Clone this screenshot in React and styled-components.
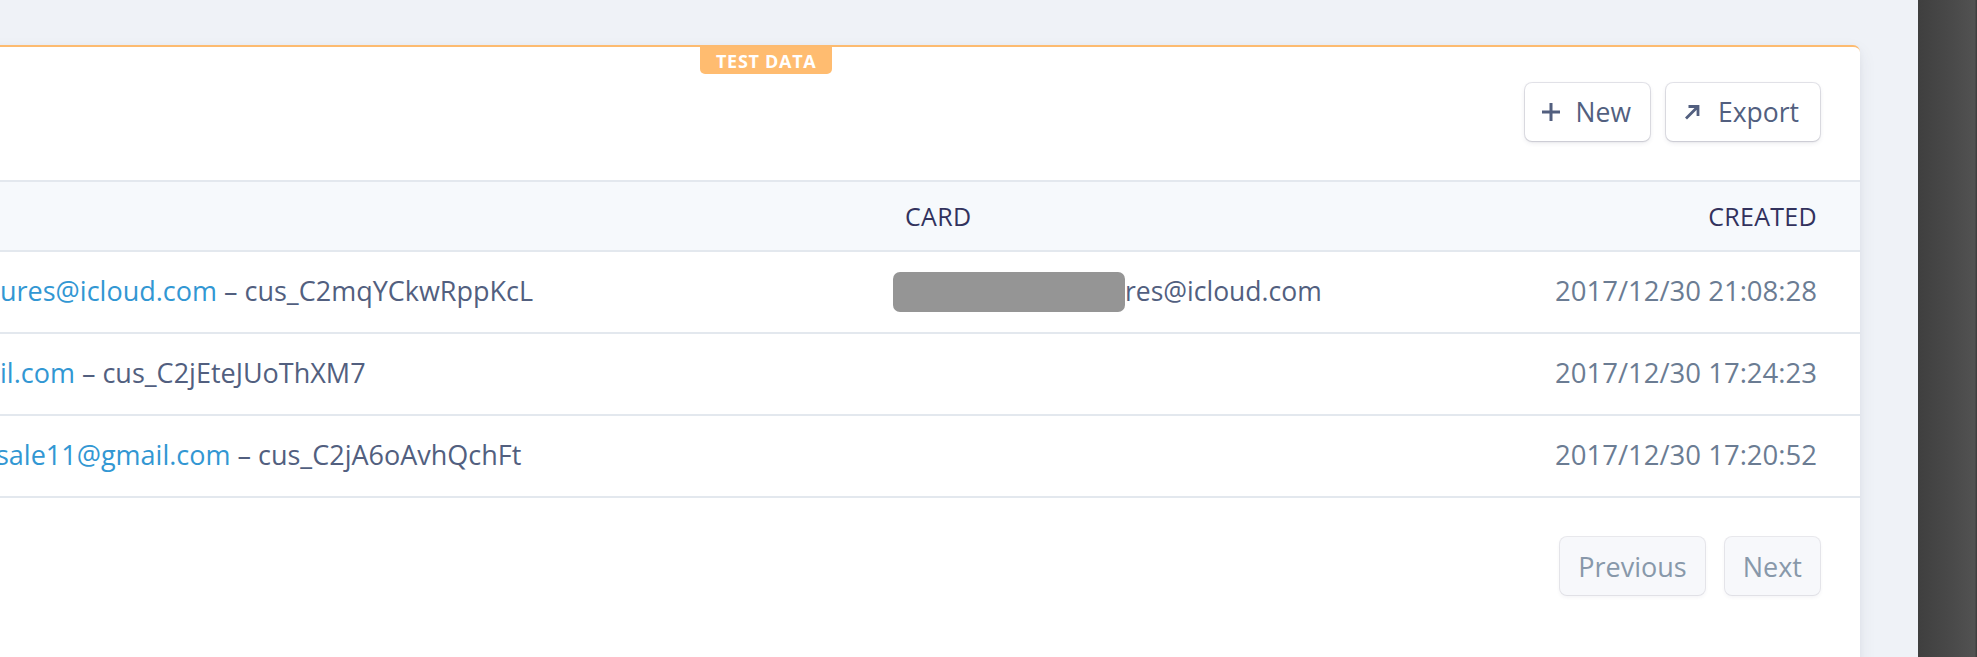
import React from "react"
import styled, { createGlobalStyle } from "styled-components"

const GlobalStyle = createGlobalStyle`
  html, body {
    margin: 0;
    padding: 0;
    background: #eff2f7;
    font-family: "Open Sans", "Noto Sans", sans-serif;
    -webkit-font-smoothing: antialiased;
  }
`

const rows = [
  {
    email: "ures@icloud.com",
    id: "cus_C2mqYCkwRppKcL",
    card: "res@icloud.com",
    created: "2017/12/30 21:08:28",
    cut: 0,
  },
  {
    email: "il.com",
    id: "cus_C2jEteJUoThXM7",
    created: "2017/12/30 17:24:23",
    cut: 0,
  },
  {
    email: "sale11@gmail.com",
    id: "cus_C2jA6oAvhQchFt",
    created: "2017/12/30 17:20:52",
    cut: -4,
  },
]

const PlusIcon = () => (
  <svg width="20" height="20" viewBox="0 0 20 20" fill="none">
    <path d="M10 1v18M1 10h18" stroke="#525f7f" strokeWidth="3" />
  </svg>
)

const ArrowIcon = () => (
  <svg width="16" height="16" viewBox="0 0 16 16" fill="none">
    <path
      d="M2 14.5L13.5 3M4.5 2.5h9.5v9.5"
      stroke="#525f7f"
      strokeWidth="2.8"
    />
  </svg>
)

const App = () => (
  <Page>
    <GlobalStyle />
    <Main>
      <Card>
        <Badge>Test data</Badge>
        <Toolbar>
          <Button>
            <PlusIcon />
            New
          </Button>
          <Button wide>
            <ArrowIcon />
            Export
          </Button>
        </Toolbar>
        <HeaderRow>
          <span />
          <HeadCell>Card</HeadCell>
          <HeadCell right>Created</HeadCell>
        </HeaderRow>
        {rows.map((r) => (
          <Row key={r.id}>
            <Customer cut={r.cut}>
              <Email>{r.email}</Email> – {r.id}
            </Customer>
            <CardCell>
              {r.card && (
                <>
                  <Redacted />
                  {r.card}
                </>
              )}
            </CardCell>
            <DateCell>{r.created}</DateCell>
          </Row>
        ))}
        <Pager>
          <PageButton>Previous</PageButton>
          <PageButton>Next</PageButton>
        </Pager>
      </Card>
    </Main>
    <SideBar />
  </Page>
)

export default App

const Page = styled.div`
  display: flex;
  height: 657px;
  overflow: hidden;
  background: #eff2f7;
`

const Main = styled.div`
  flex: 1;
  min-width: 0;
  padding: 45px 58px 0 0;
  overflow: hidden;
`

const SideBar = styled.div`
  width: 59px;
  flex-shrink: 0;
  background: linear-gradient(90deg, #3f3f3f 0%, #4a4a4a 60%, #525252 96%, #3a3a3a 100%);
`

const Card = styled.div`
  position: relative;
  margin-left: -40px;
  padding-left: 40px;
  height: 700px;
  background: #fff;
  border-top: 2px solid #fdbb70;
  border-top-right-radius: 7px;
  box-shadow: 0 7px 18px rgba(50, 50, 93, 0.08), 0 2px 6px rgba(0, 0, 0, 0.04);
`

const Badge = styled.div`
  position: absolute;
  top: 0;
  left: 740px;
  height: 27px;
  padding: 0 16px;
  display: flex;
  align-items: center;
  background: #ffbc70;
  color: #fff;
  font-size: 18px;
  font-weight: 700;
  letter-spacing: 0.7px;
  text-transform: uppercase;
  border-radius: 0 0 5px 5px;
`

const Toolbar = styled.div`
  display: flex;
  justify-content: flex-end;
  gap: 16px;
  padding: 36px 40px 39px 0;
`

const Button = styled.button`
  display: flex;
  align-items: center;
  gap: ${(p) => (p.wide ? "18px" : "15px")};
  height: 58px;
  padding: ${(p) => (p.wide ? "0 21px 0 18px" : "0 19px 0 16px")};
  background: #fff;
  border: none;
  border-radius: 7px;
  font-family: inherit;
  font-size: 26.5px;
  font-weight: 500;
  color: #525f7f;
  box-shadow: 0 0 0 1px rgba(50, 50, 93, 0.12), 0 2px 5px rgba(50, 50, 93, 0.1),
    0 1px 2px rgba(0, 0, 0, 0.08);
`

const HeaderRow = styled.div`
  display: grid;
  grid-template-columns: 905px 1fr auto;
  align-items: center;
  height: 68px;
  padding-right: 43px;
  margin-left: -40px;
  padding-left: 40px;
  background: #f6f9fc;
  border-top: 2px solid #e3e8ee;
  border-bottom: 2px solid #e3e8ee;
`

const HeadCell = styled.div`
  font-size: 25px;
  font-weight: 500;
  letter-spacing: 0.3px;
  text-transform: uppercase;
  color: #32325d;
  text-align: ${(p) => (p.right ? "right" : "left")};
`

const Row = styled.div`
  display: grid;
  grid-template-columns: 905px 1fr auto;
  align-items: center;
  height: 77px;
  padding: 0 43px 3px 40px;
  margin-left: -40px;
  border-bottom: 2px solid #e3e8ee;
  font-size: 27px;
  color: #525f7f;
  white-space: nowrap;
`

const Customer = styled.div`
  margin-left: ${(p) => p.cut}px;
`

const Email = styled.span`
  color: #3297d3;
`

const CardCell = styled.div`
  display: flex;
  align-items: center;
  margin-left: -12px;
  font-size: 26.5px;
`

const Redacted = styled.span`
  display: inline-block;
  width: 232px;
  height: 40px;
  margin-top: 2px;
  background: #959595;
  border-radius: 7px;
`

const DateCell = styled.div`
  color: #6b7c93;
  text-align: right;
  font-size: 27.5px;
`

const Pager = styled.div`
  display: flex;
  justify-content: flex-end;
  gap: 20px;
  padding: 39px 40px 0 0;
`

const PageButton = styled.button`
  height: 58px;
  padding: 0 18px;
  background: #f7f8fb;
  border: none;
  border-radius: 7px;
  font-family: inherit;
  font-size: 27px;
  font-weight: 500;
  color: #8898aa;
  box-shadow: 0 0 0 1px rgba(50, 50, 93, 0.1), 0 2px 4px rgba(50, 50, 93, 0.07);
`
